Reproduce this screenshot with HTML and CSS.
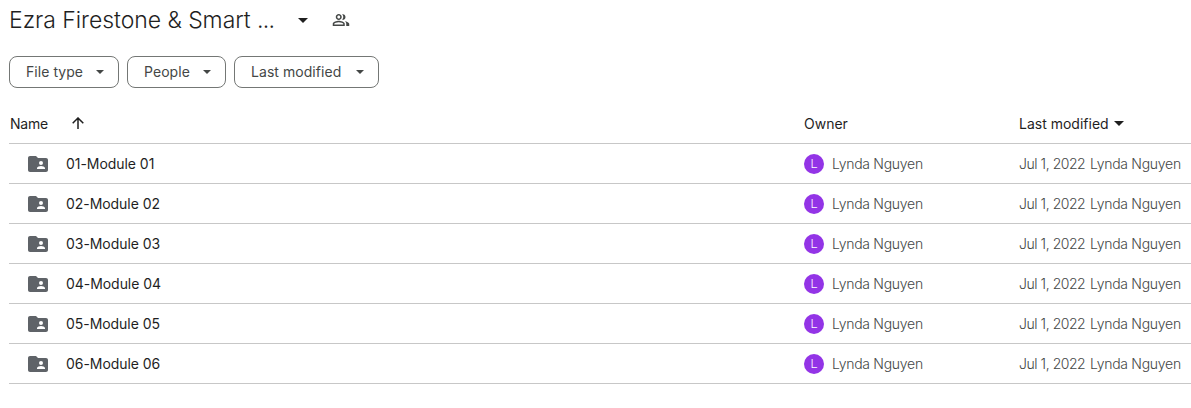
FILE: index.html
```html
<!DOCTYPE html>
<html lang="en">
<head>
    <meta charset="UTF-8">
    <meta name="viewport" content="width=device-width, initial-scale=1.0">
    <title>Ezra Firestone &amp; Smart ...</title>
    <link rel="stylesheet" href="styles.css">
</head>
<body>
    <svg class="symbols" aria-hidden="true">
        <symbol id="caret" viewBox="0 0 10 5"><path d="M0 0h10L5 5z"/></symbol>
        <symbol id="shared-folder" viewBox="0 0 20 16">
            <path fill-rule="evenodd" d="M18 2h-8L8 0H2C.9 0 0 .9 0 2v12c0 1.100.9 2 2 2h16c1.100 0 2-.9 2-2V4c0-1.100-.9-2-2-2zM13 5a2 2 0 1 1 0 4a2 2 0 1 1 0-4zM17 13H9v-1c0-1.330 2.670-2 4-2s4 .67 4 2z"/>
        </symbol>
    </svg>

    <header class="title-bar">
        <h1>Ezra Firestone &amp; Smart <span class="dots">...</span></h1>
        <svg class="caret title-caret"><use href="#caret"/></svg>
        <svg class="people-icon" viewBox="0 0 24 24">
            <path d="M9 12c2.210 0 4-1.790 4-4s-1.790-4-4-4-4 1.790-4 4 1.790 4 4 4zm0-6c1.100 0 2 .9 2 2s-.9 2-2 2-2-.9-2-2 .9-2 2-2zM9 13c-2.670 0-8 1.340-8 4v3h16v-3c0-2.660-5.330-4-8-4zm6 5H3v-.99C3.200 16.290 6.300 15 9 15s5.800 1.290 6 2zM13.500 11.600a5.500 5.500 0 0 0 0-7.200C15.700 3.500 18 5.400 18 8s-2.300 4.500-4.500 3.600zM19 20v-3c0-1.450-.75-2.560-1.900-3.400C19.600 14.100 23 15.200 23 17v3z"/>
        </svg>
    </header>

    <div class="filters">
        <button class="chip chip-type"><span>File type</span><svg class="caret"><use href="#caret"/></svg></button>
        <button class="chip chip-people"><span>People</span><svg class="caret"><use href="#caret"/></svg></button>
        <button class="chip chip-modified"><span>Last modified</span><svg class="caret"><use href="#caret"/></svg></button>
    </div>

    <div class="file-list">
        <div class="row list-head">
            <div class="name">
                <span class="head-name">Name</span>
                <svg class="arrow-up" viewBox="0 0 12 12"><path d="M6 12V1M.7 6.300L6 1l5.300 5.300"/></svg>
            </div>
            <div class="owner"><span class="head-owner">Owner</span></div>
            <div class="modified"><span class="head-modified">Last modified</span><svg class="caret"><use href="#caret"/></svg></div>
        </div>
        <div id="files"></div>
    </div>

    <script>
        const files = ["01-Module 01", "02-Module 02", "03-Module 03", "04-Module 04", "05-Module 05", "06-Module 06"];
        const list = document.getElementById("files");

        files.forEach(file => {
            const row = document.createElement("div");
            row.className = "row";
            row.innerHTML = `
                <div class="name"><svg class="folder"><use href="#shared-folder"/></svg><span class="file-name">${file}</span></div>
                <div class="owner"><span class="avatar">L</span><span class="person">Lynda Nguyen</span></div>
                <div class="modified"><span class="date">Jul 1, 2022</span><span class="person">Lynda Nguyen</span></div>
            `;
            list.appendChild(row);
        });
    </script>
</body>
</html>
```
FILE: styles.css
```css
body {
    margin: 0;
    padding-left: 9px;
    background-color: #fff;
    color: #1f1f1f;
    font-family: Inter, Roboto, sans-serif;
    font-size: 14px;
    overflow: hidden;
}
.symbols {
    display: none;
}
.title-bar {
    display: flex;
    align-items: center;
    height: 40px;
}
h1 {
    width: 289px;
    margin: 0;
    font-size: 23px;
    font-weight: 350;
    letter-spacing: -0.05px;
    line-height: 40px;
    white-space: nowrap;
}
.dots {
    letter-spacing: -0.8px;
}
.caret {
    width: 8px;
    height: 4px;
    flex: none;
    fill: currentColor;
}
.title-caret {
    width: 10px;
    height: 5px;
}
.people-icon {
    width: 18px;
    height: 18px;
    margin-left: 24px;
    fill: #444746;
}
.filters {
    display: flex;
    gap: 8px;
    margin-top: 16px;
}
.chip {
    display: flex;
    align-items: center;
    justify-content: space-between;
    box-sizing: border-box;
    height: 32px;
    padding: 0 14px 0 16px;
    border: 1px solid #747775;
    border-radius: 8px;
    background-color: #fff;
    color: #444746;
    font: 400 14px Inter, Roboto, sans-serif;
    letter-spacing: 0.05px;
    white-space: nowrap;
}
.chip span {
    padding-bottom: 1px;
}
.chip-type {
    width: 110px;
}
.chip-people {
    width: 99px;
}
.chip-modified {
    width: 145px;
}
.row {
    display: grid;
    grid-template-columns: 795px 215px 1fr;
    box-sizing: border-box;
    height: 40px;
    border-bottom: 1px solid #c7c7c7;
    white-space: nowrap;
}
.file-list {
    margin-top: 16px;
}
.name, .owner, .modified {
    display: flex;
    align-items: center;
}
.head-name {
    width: 62px;
    padding-left: 1px;
    letter-spacing: -0.2px;
}
.arrow-up {
    width: 12px;
    height: 12px;
    margin-top: -1px;
    fill: none;
    stroke: #1f1f1f;
    stroke-width: 1.5;
}
.list-head .caret {
    width: 10px;
    height: 5px;
    margin-left: 5px;
}
.folder {
    width: 20px;
    height: 16px;
    margin-left: 19px;
    fill: #5f6368;
}
.file-name {
    margin-left: 18px;
    letter-spacing: -0.05px;
}
.avatar {
    width: 20px;
    height: 20px;
    margin-right: 8px;
    border-radius: 50%;
    background-color: #9334e6;
    color: #fff;
    font: 300 13px/20px Roboto, sans-serif;
    text-align: center;
}
.person, .date {
    color: #444746;
    font-weight: 330;
    letter-spacing: -0.28px;
}
.date {
    width: 71px;
    letter-spacing: -0.45px;
}
```
